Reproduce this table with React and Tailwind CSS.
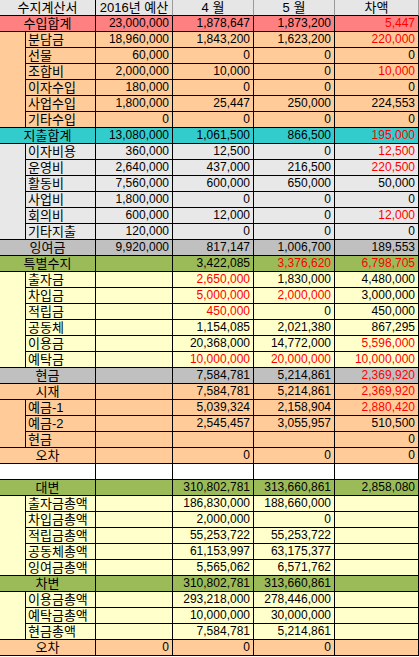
const ORANGE = "bg-[#ffcc99]";
const GRAY = "bg-[#e8e8e8]";
const SILVER = "bg-[#c0c0c0]";
const GREEN = "bg-[#9bbb59]";
const YELLOW = "bg-[#ffffcc]";

// values starting with "!" are shown in red
const rows = [
  { type: "total", label: "수입합계", bg: "bg-[#ff8080]", v: ["23,000,000", "1,878,647", "1,873,200", "!5,447"] },
  { type: "sub", label: "분담금", bg: ORANGE, v: ["18,960,000", "1,843,200", "1,623,200", "!220,000"] },
  { type: "sub", label: "선물", bg: ORANGE, v: ["60,000", "0", "0", "0"] },
  { type: "sub", label: "조합비", bg: ORANGE, v: ["2,000,000", "10,000", "0", "!10,000"] },
  { type: "sub", label: "이자수입", bg: ORANGE, v: ["180,000", "0", "0", "0"] },
  { type: "sub", label: "사업수입", bg: ORANGE, v: ["1,800,000", "25,447", "250,000", "224,553"] },
  { type: "sub", label: "기타수입", bg: ORANGE, v: ["0", "0", "0", "0"], last: true },
  { type: "total", label: "지출합계", bg: "bg-[#33cccc]", v: ["13,080,000", "1,061,500", "866,500", "!195,000"] },
  { type: "sub", label: "이자비용", bg: GRAY, v: ["360,000", "12,500", "0", "!12,500"] },
  { type: "sub", label: "운영비", bg: GRAY, v: ["2,640,000", "437,000", "216,500", "!220,500"] },
  { type: "sub", label: "활동비", bg: GRAY, v: ["7,560,000", "600,000", "650,000", "50,000"] },
  { type: "sub", label: "사업비", bg: GRAY, v: ["1,800,000", "0", "0", "0"] },
  { type: "sub", label: "회의비", bg: GRAY, v: ["600,000", "12,000", "0", "!12,000"] },
  { type: "sub", label: "기타지출", bg: GRAY, v: ["120,000", "0", "0", "0"], last: true },
  { type: "total", label: "잉여금", bg: SILVER, v: ["9,920,000", "817,147", "1,006,700", "189,553"] },
  { type: "total", label: "특별수지", bg: GREEN, v: ["", "3,422,085", "!3,376,620", "!6,798,705"] },
  { type: "sub", label: "출자금", bg: YELLOW, v: ["", "!2,650,000", "1,830,000", "4,480,000"] },
  { type: "sub", label: "차입금", bg: YELLOW, v: ["", "!5,000,000", "!2,000,000", "3,000,000"] },
  { type: "sub", label: "적립금", bg: YELLOW, v: ["", "!450,000", "0", "450,000"] },
  { type: "sub", label: "공동체", bg: YELLOW, v: ["", "1,154,085", "2,021,380", "867,295"] },
  { type: "sub", label: "이용금", bg: YELLOW, v: ["", "20,368,000", "14,772,000", "!5,596,000"] },
  { type: "sub", label: "예탁금", bg: YELLOW, v: ["", "!10,000,000", "!20,000,000", "!10,000,000"], last: true },
  { type: "total", label: "현금", bg: SILVER, v: ["", "7,584,781", "5,214,861", "!2,369,920"] },
  { type: "total", label: "시재", bg: ORANGE, v: ["", "7,584,781", "5,214,861", "!2,369,920"] },
  { type: "sub", label: "예금-1", bg: ORANGE, v: ["", "5,039,324", "2,158,904", "!2,880,420"] },
  { type: "sub", label: "예금-2", bg: ORANGE, v: ["", "2,545,457", "3,055,957", "510,500"] },
  { type: "sub", label: "현금", bg: ORANGE, v: ["", "", "", "0"], last: true },
  { type: "total", label: "오차", bg: ORANGE, v: ["", "0", "0", "0"] },
  { type: "total", label: "", bg: "bg-white", v: ["", "", "", ""] },
  { type: "total", label: "대변", bg: GREEN, v: ["", "310,802,781", "313,660,861", "2,858,080"] },
  { type: "sub", label: "출자금총액", bg: YELLOW, v: ["", "186,830,000", "188,660,000", ""] },
  { type: "sub", label: "차입금총액", bg: YELLOW, v: ["", "2,000,000", "0", ""] },
  { type: "sub", label: "적립금총액", bg: YELLOW, v: ["", "55,253,722", "55,253,722", ""] },
  { type: "sub", label: "공동체총액", bg: YELLOW, v: ["", "61,153,997", "63,175,377", ""] },
  { type: "sub", label: "잉여금총액", bg: YELLOW, v: ["", "5,565,062", "6,571,762", ""], last: true },
  { type: "total", label: "차변", bg: GREEN, v: ["", "310,802,781", "313,660,861", ""] },
  { type: "sub", label: "이용금총액", bg: YELLOW, v: ["", "293,218,000", "278,446,000", ""] },
  { type: "sub", label: "예탁금총액", bg: YELLOW, v: ["", "10,000,000", "30,000,000", ""] },
  { type: "sub", label: "현금총액", bg: YELLOW, v: ["", "7,584,781", "5,214,861", ""], last: true },
  { type: "total", label: "오차", bg: ORANGE, v: ["0", "0", "0", ""] },
];

const widths = ["w-[77px]", "w-[81px]", "w-[81px]", "flex-1"];

function NumCell({ value, width }) {
  const red = value.startsWith("!");
  return (
    <div
      className={`${width} h-full border-r border-b border-black pr-[3px] text-right ${
        red ? "text-[#ff0000]" : "text-black"
      }`}
    >
      {red ? value.slice(1) : value}
    </div>
  );
}

function Row({ row }) {
  return (
    <div className={`flex h-4 ${row.bg}`}>
      {row.type === "total" ? (
        <div className="w-[96px] h-full border-r border-b border-black flex items-center justify-center text-[13px] leading-none">
          {row.label}
        </div>
      ) : (
        <>
          <div className={`w-[26px] h-full border-r border-black ${row.last ? "border-b" : ""}`} />
          <div className="w-[70px] h-full border-r border-b border-black pl-[2px] flex items-center text-[13px] leading-none whitespace-nowrap overflow-hidden">
            {row.label}
          </div>
        </>
      )}
      {row.v.map((value, i) => (
        <NumCell key={i} value={value} width={widths[i]} />
      ))}
    </div>
  );
}

export default function App() {
  return (
    <div
      className="w-[419px] h-[657px] bg-white text-[12px] leading-[15px] overflow-hidden"
      style={{ fontFamily: '"Liberation Sans", "Noto Sans CJK KR", sans-serif' }}
    >
      {/* Header */}
      <div className="flex h-4 bg-[#e6e6e6] text-[13px]">
        <div className="w-[96px] h-full border-r border-b border-black flex items-center justify-center leading-none">
          수지계산서
        </div>
        <div className="w-[77px] h-full border-r border-b border-[#9a9a9a] border-b-black flex items-center justify-center leading-none">
          2016년 예산
        </div>
        <div className="w-[81px] h-full border-r border-b border-[#9a9a9a] border-b-black flex items-center justify-center leading-none">
          4 월
        </div>
        <div className="w-[81px] h-full border-r border-b border-[#9a9a9a] border-b-black flex items-center justify-center leading-none">
          5 월
        </div>
        <div className="flex-1 h-full border-r border-b border-[#9a9a9a] border-b-black flex items-center justify-center leading-none">
          차액
        </div>
      </div>

      {rows.map((row, i) => (
        <Row key={i} row={row} />
      ))}
    </div>
  );
}
